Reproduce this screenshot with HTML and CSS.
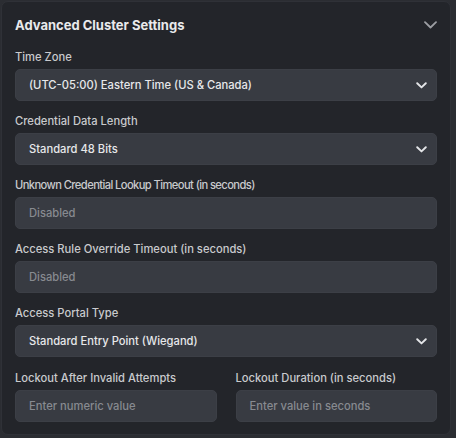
FILE: index.html
```html
<html>
<head>
<title>Advanced Cluster Settings</title>
<link rel="stylesheet" href="styles.css">
</head>
<body>
<div class="panel">
  <div class="panel-head">
    <h2>Advanced Cluster Settings</h2>
    <svg class="chev-lg" width="13" height="8" viewBox="0 0 13 8"><path d="M1 1.2 L6.5 6.5 L12 1.2" fill="none" stroke="#9c9ea3" stroke-width="1.8" stroke-linecap="round" stroke-linejoin="round"/></svg>
  </div>

  <div class="field">
    <label>Time Zone</label>
    <div class="box select">
      <span class="value">(UTC-05:00) Eastern Time (US &amp; Canada)</span>
      <svg class="chev" width="11" height="7" viewBox="0 0 11 7"><path d="M1.2 1.2 L5.5 5.4 L9.8 1.2" fill="none" stroke="#e4e5e8" stroke-width="1.9" stroke-linecap="round" stroke-linejoin="round"/></svg>
    </div>
  </div>

  <div class="field">
    <label>Credential Data Length</label>
    <div class="box select">
      <span class="value">Standard 48 Bits</span>
      <svg class="chev" width="11" height="7" viewBox="0 0 11 7"><path d="M1.2 1.2 L5.5 5.4 L9.8 1.2" fill="none" stroke="#e4e5e8" stroke-width="1.9" stroke-linecap="round" stroke-linejoin="round"/></svg>
    </div>
  </div>

  <div class="field">
    <label class="tight">Unknown Credential Lookup Timeout (in seconds)</label>
    <div class="box"><span class="hint">Disabled</span></div>
  </div>

  <div class="field">
    <label>Access Rule Override Timeout (in seconds)</label>
    <div class="box"><span class="hint">Disabled</span></div>
  </div>

  <div class="field">
    <label>Access Portal Type</label>
    <div class="box select">
      <span class="value">Standard Entry Point (Wiegand)</span>
      <svg class="chev" width="11" height="7" viewBox="0 0 11 7"><path d="M1.2 1.2 L5.5 5.4 L9.8 1.2" fill="none" stroke="#e4e5e8" stroke-width="1.9" stroke-linecap="round" stroke-linejoin="round"/></svg>
    </div>
  </div>

  <div class="pair">
    <div class="field">
      <label>Lockout After Invalid Attempts</label>
      <div class="box"><span class="hint">Enter numeric value</span></div>
    </div>
    <div class="field">
      <label>Lockout Duration (in seconds)</label>
      <div class="box"><span class="hint">Enter value in seconds</span></div>
    </div>
  </div>
</div>
</body>
</html>
```

FILE: styles.css
```css
body {
  margin: 0;
  padding: 1px 0 0 1px;
  background: #2b2d32;
  font-family: Inter, "Noto Sans", sans-serif;
}

.panel {
  width: 422px;
  height: 410px;
  padding: 11px 13px 11px 13px;
  background: #23252a;
  border: 1px solid #2f3137;
  border-radius: 7px;
  display: flex;
  flex-direction: column;
  gap: 10.1px;
}

.panel-head {
  display: flex;
  align-items: center;
  justify-content: space-between;
  height: 24px;
}
.panel-head h2 {
  margin: 0;
  font-size: 13px;
  font-weight: 700;
  color: #e9eaec;
  line-height: 24px;
}

.field { display: flex; flex-direction: column; gap: 3px; }
.field label {
  padding-top: 1px;
  font-size: 11.2px;
  font-weight: 500;
  line-height: 18px;
  color: #c9cacd;
}
.field label.tight { letter-spacing: -0.6px; }

.box {
  height: 32px;
  box-sizing: border-box;
  background: #383b42;
  border: 1px solid #3c3f46;
  border-radius: 5px;
  padding: 0 9px 0 13px;
  display: flex;
  align-items: center;
  justify-content: space-between;
  font-size: 11.2px;
}
.value { color: #e7e8ea; font-weight: 500; }
.hint { color: #878a90; font-weight: 500; }

.pair {
  display: grid;
  grid-template-columns: 1fr 1fr;
  gap: 19px;
}
```
